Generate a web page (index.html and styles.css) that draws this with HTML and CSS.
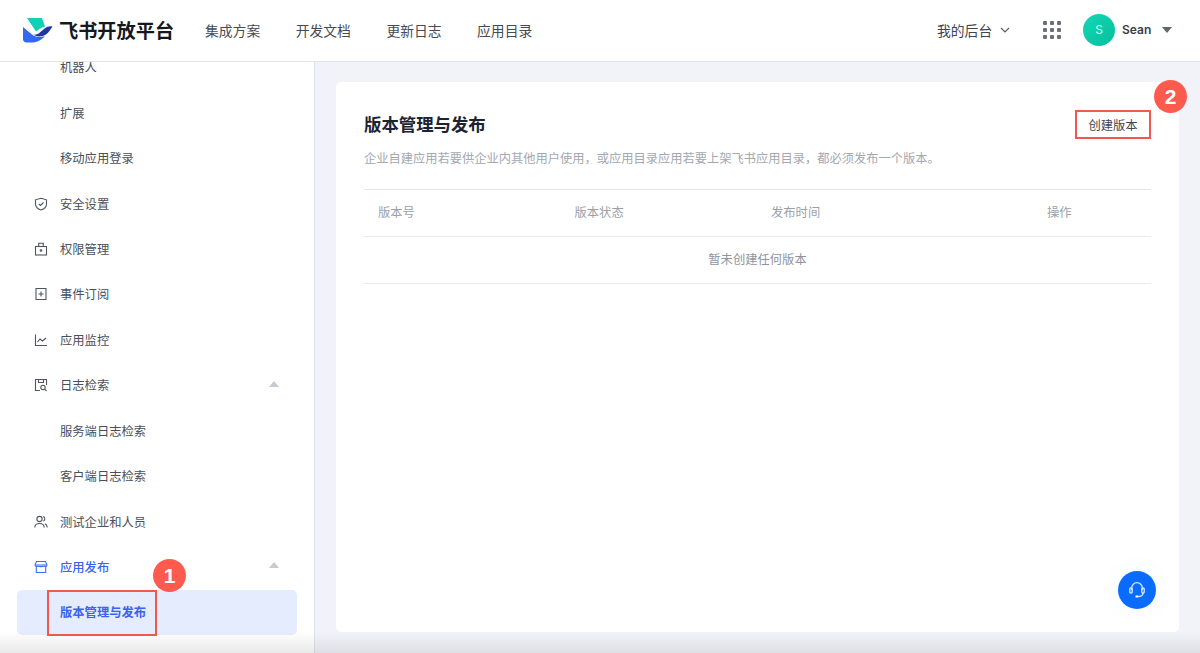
FILE: index.html
```html
<!DOCTYPE html>
<html lang="zh">
<head>
<meta charset="utf-8">
<title>飞书开放平台</title>
<link rel="stylesheet" href="styles.css">
</head>
<body>
<div class="app">
  <header class="topbar">
    <a class="brand">
      <svg class="logo" width="30" height="25" viewBox="0 0 30 25"><path d="M4 0H19L22 8.500C18 9.500 15 12 13 13.500Z" fill="#12cfb8"/><path d="M10 16.500C15 18 18 13 21 11 24 8.500 27 8 29.500 8.500 27.500 11 26.500 14 23 16.500 19 19 14 19 10 16.500Z" fill="#1f35a8"/><path d="M0 9 9 16.500C13 19.500 18 19.500 22 18 18.500 22 14 24.500 9 24.500H3.500C1.500 24.500 0 23 0 21Z" fill="#3368f5"/></svg>
      <span class="brand-name">飞书开放平台</span>
    </a>
    <nav class="nav">
      <a>集成方案</a><a>开发文档</a><a>更新日志</a><a>应用目录</a>
    </nav>
    <div class="top-right">
      <a class="console">我的后台
        <svg width="10" height="6" viewBox="0 0 10 6"><path d="M1 1L5 5 9 1" fill="none" stroke="#555b66" stroke-width="1.100"/></svg>
      </a>
      <div class="apps"><i></i><i></i><i></i><i></i><i></i><i></i><i></i><i></i><i></i></div>
      <div class="avatar">S</div>
      <span class="user">Sean</span>
      <span class="caret-down"></span>
    </div>
  </header>
  <div class="body">
    <aside class="sidebar">
      <ul class="menu">
        <li class="item">机器人</li>
        <li class="item">扩展</li>
        <li class="item">移动应用登录</li>
        <li class="item"><svg class="ic" viewBox="0 0 14 14"><path d="M7 1.300L12.500 2.800V7C12.500 10 10 12 7 13 4 12 1.500 10 1.500 7V2.800Z"/><path d="M4.700 6.800L6.500 8.500 9.500 5.500"/></svg>安全设置</li>
        <li class="item"><svg class="ic" viewBox="0 0 14 14"><rect x="1.500" y="4.500" width="11" height="8.500"/><path d="M4.700 4.500V1.200H9.300V4.500"/><circle cx="7" cy="8.500" r=".8"/></svg>权限管理</li>
        <li class="item"><svg class="ic" viewBox="0 0 14 14"><path d="M2 1.500H12V12.500H2Z"/><path d="M7 4.500V9.500M4.500 7H9.500"/></svg>事件订阅</li>
        <li class="item"><svg class="ic" viewBox="0 0 14 14"><path d="M1.500 1.500V12.500H13"/><path d="M3.500 9L6 6 8.500 8 12 5"/></svg>应用监控</li>
        <li class="item">
          <svg class="ic" viewBox="0 0 14 14"><path d="M6 12.500H1.500V1.500H12.500V7"/><path d="M4.500 1.500V4.500H9.500V1.500"/><circle cx="9" cy="9.500" r="2.200"/><path d="M10.600 11.100L12.500 13"/></svg>日志检索<span class="caret-up"></span>
        </li>
        <li class="item">服务端日志检索</li>
        <li class="item">客户端日志检索</li>
        <li class="item"><svg class="ic" viewBox="0 0 14 14"><circle cx="5.500" cy="4" r="2.600"/><path d="M.8 12.500C.8 9.800 2.800 8.500 5.500 8.500S10.200 9.800 10.200 12.500"/><path d="M9.300 1.600C11.300 1.900 11.300 5.600 9.300 6M11 8.700C12.400 9.300 13.200 10.600 13.200 12.500"/></svg>测试企业和人员</li>
        <li class="item active-parent"><svg class="ic" viewBox="0 0 14 14"><path d="M2.500 1.500H11.500L13 5C13 7 10 7 10 5.500 10 7 4 7 4 5.500 4 7 1 7 1 5Z"/><path d="M2.300 7V12.500H11.700V7M1 5H13"/></svg>应用发布<span class="caret-up"></span></li>
        <li class="item active">版本管理与发布</li>
      </ul>
      <div class="mark-box-1"></div>
      <div class="badge badge-1">1</div>
    </aside>
    <main class="main">
      <section class="card">
        <div class="card-head">
          <h1 class="title">版本管理与发布</h1>
          <button class="create">创建版本</button>
          <div class="badge badge-2">2</div>
        </div>
        <p class="desc">企业自建应用若要供企业内其他用户使用，或应用目录应用若要上架飞书应用目录，都必须发布一个版本。</p>
        <div class="table">
          <div class="row head"><span class="c1">版本号</span><span class="c2">版本状态</span><span class="c3">发布时间</span><span class="c4">操作</span></div>
          <div class="row empty">暂未创建任何版本</div>
        </div>
        <button class="help" aria-label="帮助">
          <svg width="20" height="20" viewBox="0 0 20 20" fill="none" stroke="#d8e8ff" stroke-width="1.300"><path d="M4.700 10V8A5.300 5.300 0 0 1 15.300 8V10"/><rect x="2.800" y="8" width="2.400" height="5" rx="1"/><rect x="14.800" y="8" width="2.400" height="5" rx="1"/><path d="M16 13C16 15.500 13.500 16.500 11 16.500"/><path d="M8.500 16.500H11" stroke-width="2" stroke="#fff"/></svg>
        </button>
      </section>
    </main>
  </div>
  <div class="edge-shade"></div>
</div>
</body>
</html>
```
FILE: styles.css
```css
* { box-sizing: border-box; }
html, body { margin: 0; height: 100%; overflow: hidden; }
body {
  font-family: Inter, "Noto Sans CJK SC", "Noto Sans", sans-serif;
  color: #3a3f49;
  background: #fff;
}
ul { list-style: none; margin: 0; padding: 0; }
.app { position: relative; width: 1200px; height: 653px; display: flex; flex-direction: column; overflow: hidden; }

.topbar {
  height: 62px;
  flex: none;
  display: flex;
  align-items: center;
  padding: 0 0 2px 23px;
  background: #fff;
  border-bottom: 1px solid #e2e4e9;
  position: relative;
  z-index: 2;
}
.brand { display: flex; align-items: center; gap: 6px; width: 182px; }
.logo { flex: none; margin-top: 2px; }
.brand-name { font-size: 19.200px; font-weight: 700; color: #15181f; white-space: nowrap; }
.nav { display: flex; gap: 35.500px; font-size: 13.800px; color: #454a54; }
.top-right { margin-left: auto; display: flex; align-items: center; }
.console { display: flex; align-items: center; gap: 8px; font-size: 13.800px; color: #3f444e; width: 106px; }
.apps { display: grid; grid-template-columns: repeat(3, 4px); gap: 3px; width: 18px; margin-top: 1px; }
.apps i { width: 4px; height: 4px; border-radius: 1px; background: #6a6f7a; }
.avatar {
  width: 32px; height: 32px; margin-left: 22px; border-radius: 50%;
  background: linear-gradient(135deg, #14d6b6, #06c09c);
  color: #d5fff5; font-size: 12px; display: flex; align-items: center; justify-content: center;
}
.user { margin-left: 7px; font-size: 12px; font-weight: 600; color: #3a3f49; width: 40px; }
.caret-down {
  width: 0; height: 0; margin-right: 28px;
  border-left: 5px solid transparent; border-right: 5px solid transparent; border-top: 6px solid #62676f;
}

.body { flex: 1; min-height: 0; display: flex; }
.sidebar {
  position: relative;
  width: 315px;
  flex: none;
  background: #fff;
  border-right: 1px solid #dfe1e6;
  overflow: hidden;
}
.menu { margin-top: -17.500px; padding: 0 17px; }
.item {
  position: relative;
  height: 45.450px;
  display: flex;
  align-items: center;
  padding-left: 43px;
  font-size: 12.300px;
  color: #4a4f59;
  white-space: nowrap;
}
.ic {
  position: absolute;
  left: 17px;
  top: 50%;
  width: 14px;
  height: 14px;
  margin-top: -7px;
  fill: none;
  stroke: #50555f;
  stroke-width: 1.100;
}
.caret-up {
  position: absolute;
  right: 18px;
  top: 18px;
  width: 0; height: 0;
  border-left: 5px solid transparent; border-right: 5px solid transparent; border-bottom: 6px solid #c6cad1;
}
.active-parent { color: #3b62ee; font-weight: 500; }
.active-parent .ic { stroke: #3b6cf6; }
.active { background: #e5ecfd; border-radius: 5px; color: #3b62ee; font-weight: 600; }
.mark-box-1 {
  position: absolute; left: 47px; top: 528px; width: 110px; height: 46px;
  border: 2px solid #f2584c; pointer-events: none;
}
.badge {
  position: absolute; width: 33px; height: 33px; border-radius: 50%;
  background: #ff5a4e; color: #fff; font-size: 21px; font-weight: 700;
  display: flex; align-items: center; justify-content: center;
  font-family: "Liberation Sans", sans-serif;
}
.badge-1 { left: 153px; top: 497px; }

.main { flex: 1; min-width: 0; background: #f2f3f8; padding: 20px 21px 21px; }
.card {
  position: relative; height: 550px; background: #fff; border-radius: 5px; padding: 28px;
}
.card-head { position: relative; display: flex; align-items: center; justify-content: space-between; height: 29px; }
.title { margin: 0; font-size: 17.400px; font-weight: 700; color: #1c2333; line-height: 29px; }
.create {
  width: 76px; height: 29px; padding: 0; background: #fff; border: 2px solid #f2584c;
  font: inherit; font-size: 12.300px; color: #3f444e;
}
.badge-2 { right: -36px; top: -30px; }
.desc { margin: 10px 0 0; font-size: 12.250px; line-height: 20px; color: #a3a8b1; white-space: nowrap; }
.table { margin-top: 20px; border-top: 1px solid #e4e6ea; font-size: 12.300px; }
.row { height: 47px; padding-bottom: 2px; border-bottom: 1px solid #e8eaed; display: flex; align-items: center; color: #9a9fa8; }
.head { padding-left: 14px; }
.c1, .c2 { width: 196.500px; }
.c3 { width: 276px; }
.empty { justify-content: center; color: #8f949d; }
.help {
  position: absolute; right: 23px; bottom: 23px; width: 38px; height: 38px;
  padding: 0; border: 0; border-radius: 50%; background: #0a6cff;
  display: flex; align-items: center; justify-content: center;
  box-shadow: 0 0 24px rgba(10, 108, 255, .05);
}
.edge-shade {
  position: absolute; left: 0; right: 0; bottom: 0; height: 21px;
  background: linear-gradient(to bottom, rgba(120, 120, 125, 0), rgba(120, 120, 125, .16));
  pointer-events: none;
  z-index: 3;
}
```
